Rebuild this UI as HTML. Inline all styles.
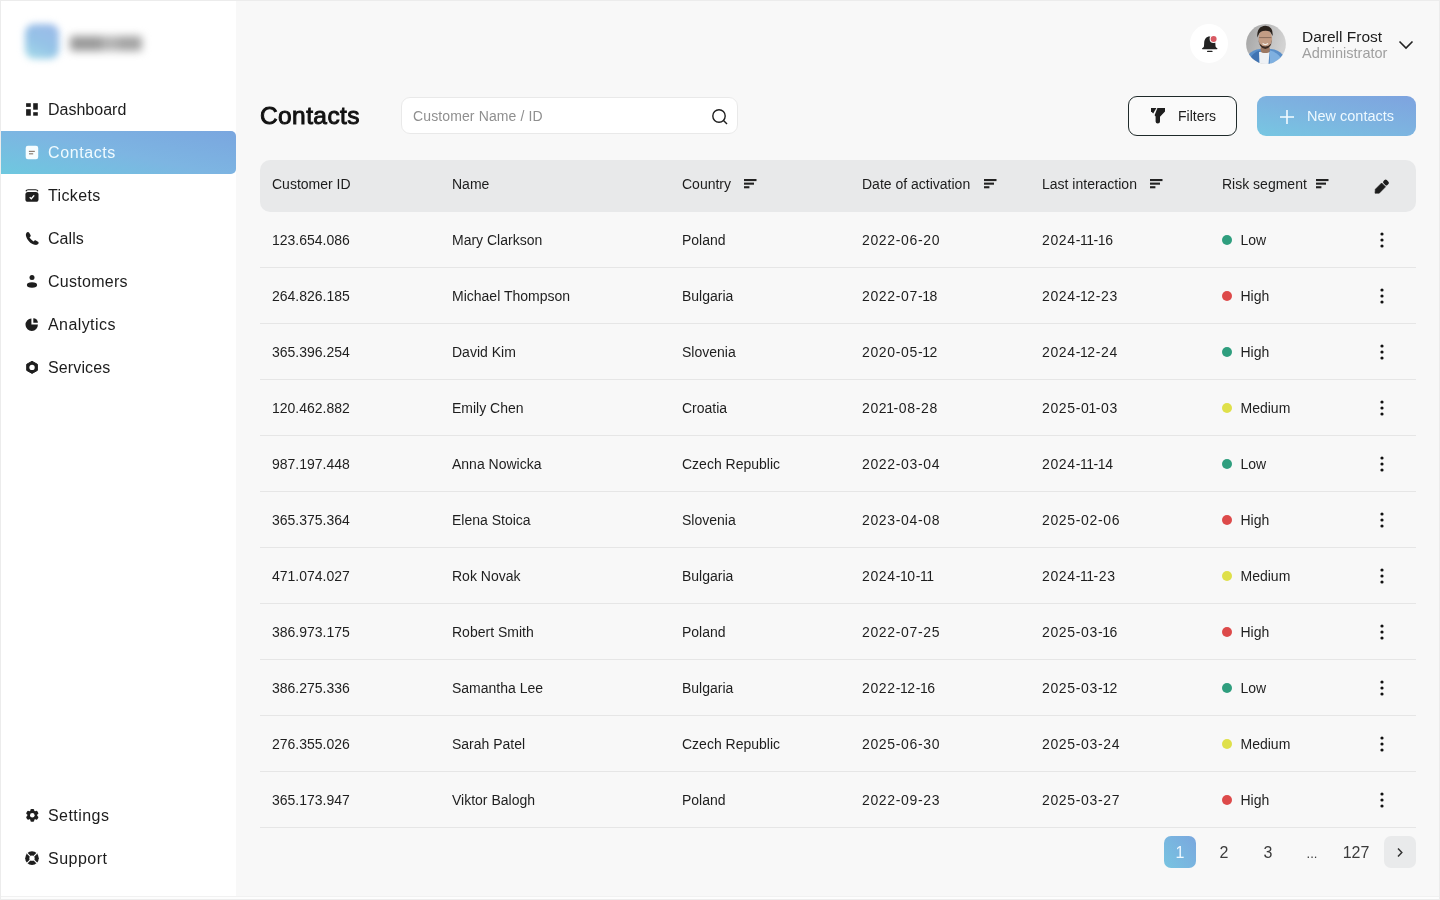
<!DOCTYPE html>
<html><head><meta charset="utf-8">
<style>
*{box-sizing:border-box;margin:0;padding:0}
html,body{width:1440px;height:900px;overflow:hidden}
body{font-family:"Liberation Sans",sans-serif;background:#f8f8f8;color:#1e1e1e;position:relative;-webkit-font-smoothing:antialiased}
.wrap{position:absolute;left:0;top:0;width:1440px;height:900px;will-change:transform}
.frame{position:absolute;left:0;top:0;width:1440px;height:900px;border:1px solid #ececec;pointer-events:none;z-index:50}
.side{position:absolute;left:0;top:0;width:236px;height:900px;background:#fff}
.logo-sq{position:absolute;left:25px;top:24px;width:34px;height:35px;border-radius:9px;background:linear-gradient(25deg,#a6dde9 0%,#95c3e7 45%,#9cb9e9 100%);filter:blur(3.8px)}
.logo-tx{position:absolute;left:66px;top:32px;width:80px;height:22px;filter:blur(4.5px)}
.logo-tx i{position:absolute;top:4px;height:15px;border-radius:3px}
.nav{position:absolute;left:1px;width:235px;height:43px;font-size:16px;line-height:43px;color:#1c1c1c}
.nav .ic{position:absolute;left:24px;top:14px;width:15px;height:15px}
.nav .tx{position:absolute;left:47px;top:0}
.nav.active{background:linear-gradient(12deg,#6ec8df 0%,#7db5e2 50%,#7aa6df 100%);border-radius:0 5px 5px 0;color:#f0fbff}
.title{position:absolute;left:260px;top:100px;font-size:24.5px;-webkit-text-stroke:0.95px #111;color:#111;line-height:32px;letter-spacing:0.4px}
.search{position:absolute;left:401px;top:97px;width:337px;height:37px;background:#fff;border:1px solid #e9e9e9;border-radius:9px}
.search .ph{position:absolute;left:11px;top:0;letter-spacing:0.12px;line-height:36px;font-size:14px;color:#8f8f8f}
.search svg{position:absolute;right:8.3px;top:9.6px}
.btn-f{position:absolute;left:1128px;top:96px;width:109px;height:39.5px;border:1.5px solid #1f2a2a;border-radius:9px;background:#fafafa}
.btn-f .tx{position:absolute;left:49px;top:1px;line-height:37px;font-size:14px;color:#1e1e1e}
.btn-f svg{position:absolute;left:21.5px;top:10.5px}
.btn-n{position:absolute;left:1257px;top:96px;width:159px;height:40px;border-radius:9px;background:linear-gradient(12deg,#77c7e2 0%,#7db3e0 50%,#7ea3df 100%)}
.btn-n .tx{position:absolute;left:50px;top:0;line-height:40px;font-size:14.5px;color:#eef9ff}
.btn-n svg{position:absolute;left:22px;top:12.5px}
.thead{position:absolute;left:260px;top:160px;width:1156px;height:51.5px;background:#e8e9ea;border-radius:10px}
.th{position:absolute;top:0;white-space:nowrap;line-height:48px;font-size:14px;color:#1c1c1c}
.si{position:absolute;top:19.2px}
.row{position:absolute;left:260px;width:1156px;height:56px;border-bottom:1px solid #e6e6e6}
.td{position:absolute;top:1px;line-height:54px;font-size:14px;color:#1e1e1e;white-space:nowrap}
.td.num{letter-spacing:0.65px}
.dot{position:absolute;top:23px;width:10px;height:10px;border-radius:50%}
.kebab{position:absolute;left:1120px;top:20px}
.pg{position:absolute;top:836px;width:32px;height:32px;border-radius:7px;line-height:34px;text-align:center;font-size:16px;color:#3c3c3c}
.pg.active{background:linear-gradient(50deg,#78c4e1,#7aa7de);color:#eef8ff}
.pg.next{background:#e9eaeb}
.pg.dots{font-size:13px;line-height:36px}
.bell{position:absolute;left:1190px;top:24px;width:38px;height:39px;border-radius:50%;background:#fff}
.bell svg{position:absolute;left:9.5px;top:11px}
.avatar{position:absolute;left:1246.3px;top:24px}
.uname{position:absolute;left:1302px;top:28px;font-size:15.5px;color:#1c1c1c;line-height:18px}
.urole{position:absolute;left:1302px;top:45px;font-size:14.5px;color:#a0a0a0;line-height:16px}
.chev{position:absolute;left:1398px;top:39.5px}
.one{font-weight:normal;margin:0 -1.1px}
.bline{position:absolute;left:0;top:896px;width:1440px;height:3px;background:#fdfdfd;border-top:1px solid #f1f1f1;z-index:49}

</style></head>
<body>
<div class="wrap">
<div class="side">
  <div class="logo-sq"></div>
  <div class="logo-tx"><i style="left:4px;width:34px;background:#999"></i><i style="left:36px;width:18px;background:#b3b3b3"></i><i style="left:52px;width:24px;background:#a3a3a3"></i></div>
<div class="nav" style="top:88px"><svg class="ic" viewBox="0 0 15 15"><rect x="1.1" y="1.2" width="4.7" height="3.7" fill="#1e1e1e"/><rect x="8.2" y="1.2" width="4.6" height="6.5" fill="#1e1e1e"/><rect x="1.1" y="7.2" width="4.7" height="6.5" fill="#1e1e1e"/><rect x="8.2" y="10.2" width="4.6" height="3.5" fill="#1e1e1e"/></svg><span class="tx" style="letter-spacing:0px">Dashboard</span></div>
<div class="nav active" style="top:131px"><svg class="ic" viewBox="0 0 15 15"><rect x="0.7" y="0.8" width="12.5" height="13.4" rx="2.2" fill="#f6fdff"/><rect x="3.9" y="5.8" width="5.9" height="1.2" fill="#8c7f74"/><rect x="4" y="8.2" width="4.2" height="1.2" fill="#8c7f74"/></svg><span class="tx" style="letter-spacing:0.6px">Contacts</span></div>
<div class="nav" style="top:174px"><svg class="ic" viewBox="0 0 15 15"><rect x="0.4" y="4" width="13.1" height="9.8" rx="2.6" fill="#1e1e1e"/><path d="M0.9 3.3 Q1.5 1.75 3.2 1.75 L10.6 1.75 Q12.3 1.75 12.9 3.3" stroke="#1e1e1e" stroke-width="1.2" fill="none"/><path d="M4.7 9.3 L6.3 10.7 L9.2 7.4" stroke="#fff" stroke-width="1.4" fill="none"/></svg><span class="tx" style="letter-spacing:0.37px">Tickets</span></div>
<div class="nav" style="top:217px"><svg class="ic" viewBox="0 0 15 15"><path d="M2.3 1.2 C1.1 1.8 0.6 3.3 1 4.9 C2.2 9.2 5.4 12.5 9.7 13.8 C11.3 14.2 12.9 13.8 13.5 12.6 C13.8 11.9 13.6 11.2 13 10.8 L10.9 9.5 C10.3 9.1 9.5 9.3 9.1 9.8 L8.6 10.4 C6.9 9.5 5.4 8 4.5 6.3 L5.2 5.8 C5.7 5.4 5.9 4.6 5.5 4 L4.2 1.7 C3.8 1.1 3 0.9 2.3 1.2 Z" fill="#1e1e1e"/></svg><span class="tx" style="letter-spacing:0.05px">Calls</span></div>
<div class="nav" style="top:260px"><svg class="ic" viewBox="0 0 15 15"><circle cx="7" cy="3.4" r="2.5" fill="#1e1e1e"/><ellipse cx="7" cy="11" rx="5.1" ry="2.8" fill="#1e1e1e"/></svg><span class="tx" style="letter-spacing:0.27px">Customers</span></div>
<div class="nav" style="top:303px"><svg class="ic" viewBox="0 0 15 15"><path d="M6.4 1.6 L6.4 7.6 L12.9 7.6 A6.2 6.2 0 1 1 6.4 1.6 Z" fill="#1e1e1e"/><path d="M8.3 1.2 A4.6 4.6 0 0 1 12.9 5.8 L8.3 5.8 Z" fill="#1e1e1e"/></svg><span class="tx" style="letter-spacing:0.42px">Analytics</span></div>
<div class="nav" style="top:346px"><svg class="ic" viewBox="0 0 15 15"><path d="M7.05 1.3 L12.4 4.3 L12.4 10.4 L7.05 13.4 L1.7 10.4 L1.7 4.3 Z" fill="#1e1e1e" stroke="#1e1e1e" stroke-width="1" stroke-linejoin="round"/><circle cx="7.05" cy="7.4" r="2.65" fill="#fff"/></svg><span class="tx" style="letter-spacing:0.13px">Services</span></div>
<div class="nav" style="top:794px"><svg class="ic" viewBox="0 0 15 15"><g fill="#1e1e1e"><circle cx="7.3" cy="7.3" r="4.9"/><rect x="5.4" y="0.9" width="3.8" height="12.8" rx="1.2"/><rect x="5.4" y="0.9" width="3.8" height="12.8" rx="1.2" transform="rotate(60 7.3 7.3)"/><rect x="5.4" y="0.9" width="3.8" height="12.8" rx="1.2" transform="rotate(120 7.3 7.3)"/></g><circle cx="7.3" cy="7.3" r="2.3" fill="#fff"/></svg><span class="tx" style="letter-spacing:0.44px">Settings</span></div>
<div class="nav" style="top:837px"><svg class="ic" viewBox="0 0 15 15"><circle cx="7" cy="7.15" r="6.8" fill="#1e1e1e"/><circle cx="7" cy="7.15" r="2.6" fill="#fff"/><path d="M2 2.15 L5.3 5.45 M12 2.15 L8.7 5.45 M2 12.15 L5.3 8.85 M12 12.15 L8.7 8.85" stroke="#fff" stroke-width="1.2"/></svg><span class="tx" style="letter-spacing:0.5px">Support</span></div>

</div>
<div class="bell"><svg width="20" height="20" viewBox="0 0 20 20"><path d="M9.7 1.6 C6.2 1.6 4.4 4.3 4.2 7.6 L4 11 C3.9 12 3.3 12.7 2.3 13.3 C1.8 13.6 1.9 14.2 2.5 14.2 L17 14.2 C17.6 14.2 17.7 13.6 17.2 13.3 C16.2 12.7 15.6 12 15.5 11 L15.3 7.6 C15.1 4.3 13.2 1.6 9.7 1.6 Z" fill="#222"/><rect x="7" y="15.8" width="5.6" height="1.3" rx=".65" fill="#222"/><circle cx="13.6" cy="3.9" r="4" fill="#fff"/><circle cx="13.6" cy="3.9" r="3" fill="#d85a63"/></svg></div>
<svg class="avatar" width="40" height="40" viewBox="0 0 40 40"><defs><clipPath id="avc"><circle cx="20" cy="20" r="19.9"/></clipPath><filter id="avb" x="-20%" y="-20%" width="140%" height="140%"><feGaussianBlur stdDeviation="0.65"/></filter><linearGradient id="avg" x1="0" y1="0" x2="1" y2="0.3"><stop offset="0" stop-color="#a3a3a3"/><stop offset="0.55" stop-color="#bdbdbd"/><stop offset="1" stop-color="#d2d2d2"/></linearGradient></defs>
<g clip-path="url(#avc)"><rect width="40" height="40" fill="url(#avg)"/><g filter="url(#avb)">
<path d="M0 42 L2 31 Q7 25.5 14 25 L25 25 Q32 25.5 37 31 L40 42 Z" fill="#5a8fc9"/>
<path d="M3 36 Q7 28 13.5 26.5 L13.5 40 L5 40 Z" fill="#3f73b2"/>
<path d="M24 26.5 Q31 28 35 34 L33 40 L24 40 Z" fill="#7fb0e0"/>
<path d="M13 28 L23.5 28 L22.5 40 L13.5 40 Z" fill="#eef1f5"/>
<rect x="14.6" y="22" width="9.2" height="7" rx="3" fill="#9c7864"/>
<ellipse cx="19.3" cy="14.8" rx="6.8" ry="9.3" fill="#c29c84"/>
<path d="M12.5 15.5 Q12.8 23.8 19.3 25 Q25.8 23.8 26.1 15.5 L25.2 19.5 Q22.5 22.6 19.3 22.6 Q16.1 22.6 13.4 19.5 Z" fill="#3b2c24"/>
<path d="M11.3 13.5 Q10.5 2.2 19.5 1.8 Q27.4 2.2 26.6 12 L25.6 10.2 Q24.5 6.6 19.3 6.8 Q14 6.8 12.6 10.8 Z" fill="#2c231e"/>
<path d="M13.2 13.6 L25.4 13.6" stroke="#5a463b" stroke-width="0.8" opacity=".7"/>
<path d="M16.6 19.6 Q19.3 21.6 22 19.6" stroke="#f4eee8" stroke-width="1.3" fill="none"/>
</g></g></svg>
<div class="uname">Darell Frost</div>
<div class="urole">Administrator</div>
<svg class="chev" width="16" height="10" viewBox="0 0 16 10"><path d="M1.5 1.5 L8 8 L14.5 1.5" stroke="#222" stroke-width="1.6" fill="none"/></svg>
<div class="title">Contacts</div>
<div class="search"><span class="ph">Customer Name / ID</span><svg width="18" height="18" viewBox="0 0 18 18"><circle cx="8" cy="8" r="6.2" stroke="#1e1e1e" stroke-width="1.4" fill="none"/><path d="M12.5 12.5 L16 16" stroke="#1e1e1e" stroke-width="1.4"/></svg></div>
<div class="btn-f"><svg width="16" height="17" viewBox="0 0 16 17"><path d="M0 0 H5.4 L2.2 5.4 L0 3.2 Z" fill="#1e1e1e"/><path d="M6.4 0 H14 V3.4 L9 8.8 V13.6 Q9 15.6 6.8 15.6 Q4.6 15.6 4.6 13.6 V8.4 L3.6 7.2 Z" fill="#1e1e1e"/></svg><span class="tx">Filters</span></div>
<div class="btn-n"><svg width="16" height="16" viewBox="0 0 16 16"><path d="M8 1 L8 15 M1 8 L15 8" stroke="#f4fbff" stroke-width="1.6"/></svg><span class="tx">New contacts</span></div>
<div class="thead"><span class="th" style="left:12px">Customer ID</span><span class="th" style="left:192px">Name</span><span class="th" style="left:422px">Country</span><span class="th" style="left:602px">Date of activation</span><span class="th" style="left:782px">Last interaction</span><span class="th" style="left:962px">Risk segment</span><svg class="si" style="left:483.7px" width="13" height="10" viewBox="0 0 13 10"><rect x="0" y="0" width="12.5" height="2.1" fill="#222"/><rect x="0" y="3.6" width="10" height="2.1" fill="#222"/><rect x="0" y="7.2" width="5.4" height="2.1" fill="#222"/></svg><svg class="si" style="left:723.6px" width="13" height="10" viewBox="0 0 13 10"><rect x="0" y="0" width="12.5" height="2.1" fill="#222"/><rect x="0" y="3.6" width="10" height="2.1" fill="#222"/><rect x="0" y="7.2" width="5.4" height="2.1" fill="#222"/></svg><svg class="si" style="left:890px" width="13" height="10" viewBox="0 0 13 10"><rect x="0" y="0" width="12.5" height="2.1" fill="#222"/><rect x="0" y="3.6" width="10" height="2.1" fill="#222"/><rect x="0" y="7.2" width="5.4" height="2.1" fill="#222"/></svg><svg class="si" style="left:1055.7px" width="13" height="10" viewBox="0 0 13 10"><rect x="0" y="0" width="12.5" height="2.1" fill="#222"/><rect x="0" y="3.6" width="10" height="2.1" fill="#222"/><rect x="0" y="7.2" width="5.4" height="2.1" fill="#222"/></svg><svg style="position:absolute;left:1111.4px;top:17px" width="20" height="20" viewBox="-10 -10 20 20"><g transform="translate(0.25 0.25) rotate(-45)"><path d="M-8.6 -0.2 L-5.6 -2.75 L3.3 -2.75 L3.3 2.75 L-5.6 2.75 Z" fill="#1e1e1e" stroke="#1e1e1e" stroke-width="0.6" stroke-linejoin="round"/><rect x="4.4" y="-2.75" width="4.6" height="5.5" rx="1.6" fill="#1e1e1e"/></g></svg></div>
<div class="row" style="top:212px"><span class="td" style="left:12px">123.654.086</span><span class="td" style="left:192px">Mary Clarkson</span><span class="td" style="left:422px">Poland</span><span class="td num" style="left:602px">2022-06-20</span><span class="td num" style="left:782px">2024-<b class="one">1</b><b class="one">1</b>-<b class="one">1</b>6</span><span class="dot" style="left:962px;background:#2f9e7e"></span><span class="td" style="left:980.5px">Low</span><svg class="kebab" width="4" height="16" viewBox="0 0 4 16"><circle cx="2" cy="2" r="1.6" fill="#111"/><circle cx="2" cy="8" r="1.6" fill="#111"/><circle cx="2" cy="14" r="1.6" fill="#111"/></svg></div>
<div class="row" style="top:268px"><span class="td" style="left:12px">264.826.185</span><span class="td" style="left:192px">Michael Thompson</span><span class="td" style="left:422px">Bulgaria</span><span class="td num" style="left:602px">2022-07-<b class="one">1</b>8</span><span class="td num" style="left:782px">2024-<b class="one">1</b>2-23</span><span class="dot" style="left:962px;background:#dd4a4a"></span><span class="td" style="left:980.5px">High</span><svg class="kebab" width="4" height="16" viewBox="0 0 4 16"><circle cx="2" cy="2" r="1.6" fill="#111"/><circle cx="2" cy="8" r="1.6" fill="#111"/><circle cx="2" cy="14" r="1.6" fill="#111"/></svg></div>
<div class="row" style="top:324px"><span class="td" style="left:12px">365.396.254</span><span class="td" style="left:192px">David Kim</span><span class="td" style="left:422px">Slovenia</span><span class="td num" style="left:602px">2020-05-<b class="one">1</b>2</span><span class="td num" style="left:782px">2024-<b class="one">1</b>2-24</span><span class="dot" style="left:962px;background:#2f9e7e"></span><span class="td" style="left:980.5px">High</span><svg class="kebab" width="4" height="16" viewBox="0 0 4 16"><circle cx="2" cy="2" r="1.6" fill="#111"/><circle cx="2" cy="8" r="1.6" fill="#111"/><circle cx="2" cy="14" r="1.6" fill="#111"/></svg></div>
<div class="row" style="top:380px"><span class="td" style="left:12px">120.462.882</span><span class="td" style="left:192px">Emily Chen</span><span class="td" style="left:422px">Croatia</span><span class="td num" style="left:602px">202<b class="one">1</b>-08-28</span><span class="td num" style="left:782px">2025-0<b class="one">1</b>-03</span><span class="dot" style="left:962px;background:#dfe04a"></span><span class="td" style="left:980.5px">Medium</span><svg class="kebab" width="4" height="16" viewBox="0 0 4 16"><circle cx="2" cy="2" r="1.6" fill="#111"/><circle cx="2" cy="8" r="1.6" fill="#111"/><circle cx="2" cy="14" r="1.6" fill="#111"/></svg></div>
<div class="row" style="top:436px"><span class="td" style="left:12px">987.197.448</span><span class="td" style="left:192px">Anna Nowicka</span><span class="td" style="left:422px">Czech Republic</span><span class="td num" style="left:602px">2022-03-04</span><span class="td num" style="left:782px">2024-<b class="one">1</b><b class="one">1</b>-<b class="one">1</b>4</span><span class="dot" style="left:962px;background:#2f9e7e"></span><span class="td" style="left:980.5px">Low</span><svg class="kebab" width="4" height="16" viewBox="0 0 4 16"><circle cx="2" cy="2" r="1.6" fill="#111"/><circle cx="2" cy="8" r="1.6" fill="#111"/><circle cx="2" cy="14" r="1.6" fill="#111"/></svg></div>
<div class="row" style="top:492px"><span class="td" style="left:12px">365.375.364</span><span class="td" style="left:192px">Elena Stoica</span><span class="td" style="left:422px">Slovenia</span><span class="td num" style="left:602px">2023-04-08</span><span class="td num" style="left:782px">2025-02-06</span><span class="dot" style="left:962px;background:#dd4a4a"></span><span class="td" style="left:980.5px">High</span><svg class="kebab" width="4" height="16" viewBox="0 0 4 16"><circle cx="2" cy="2" r="1.6" fill="#111"/><circle cx="2" cy="8" r="1.6" fill="#111"/><circle cx="2" cy="14" r="1.6" fill="#111"/></svg></div>
<div class="row" style="top:548px"><span class="td" style="left:12px">471.074.027</span><span class="td" style="left:192px">Rok Novak</span><span class="td" style="left:422px">Bulgaria</span><span class="td num" style="left:602px">2024-<b class="one">1</b>0-<b class="one">1</b><b class="one">1</b></span><span class="td num" style="left:782px">2024-<b class="one">1</b><b class="one">1</b>-23</span><span class="dot" style="left:962px;background:#dfe04a"></span><span class="td" style="left:980.5px">Medium</span><svg class="kebab" width="4" height="16" viewBox="0 0 4 16"><circle cx="2" cy="2" r="1.6" fill="#111"/><circle cx="2" cy="8" r="1.6" fill="#111"/><circle cx="2" cy="14" r="1.6" fill="#111"/></svg></div>
<div class="row" style="top:604px"><span class="td" style="left:12px">386.973.175</span><span class="td" style="left:192px">Robert Smith</span><span class="td" style="left:422px">Poland</span><span class="td num" style="left:602px">2022-07-25</span><span class="td num" style="left:782px">2025-03-<b class="one">1</b>6</span><span class="dot" style="left:962px;background:#dd4a4a"></span><span class="td" style="left:980.5px">High</span><svg class="kebab" width="4" height="16" viewBox="0 0 4 16"><circle cx="2" cy="2" r="1.6" fill="#111"/><circle cx="2" cy="8" r="1.6" fill="#111"/><circle cx="2" cy="14" r="1.6" fill="#111"/></svg></div>
<div class="row" style="top:660px"><span class="td" style="left:12px">386.275.336</span><span class="td" style="left:192px">Samantha Lee</span><span class="td" style="left:422px">Bulgaria</span><span class="td num" style="left:602px">2022-<b class="one">1</b>2-<b class="one">1</b>6</span><span class="td num" style="left:782px">2025-03-<b class="one">1</b>2</span><span class="dot" style="left:962px;background:#2f9e7e"></span><span class="td" style="left:980.5px">Low</span><svg class="kebab" width="4" height="16" viewBox="0 0 4 16"><circle cx="2" cy="2" r="1.6" fill="#111"/><circle cx="2" cy="8" r="1.6" fill="#111"/><circle cx="2" cy="14" r="1.6" fill="#111"/></svg></div>
<div class="row" style="top:716px"><span class="td" style="left:12px">276.355.026</span><span class="td" style="left:192px">Sarah Patel</span><span class="td" style="left:422px">Czech Republic</span><span class="td num" style="left:602px">2025-06-30</span><span class="td num" style="left:782px">2025-03-24</span><span class="dot" style="left:962px;background:#dfe04a"></span><span class="td" style="left:980.5px">Medium</span><svg class="kebab" width="4" height="16" viewBox="0 0 4 16"><circle cx="2" cy="2" r="1.6" fill="#111"/><circle cx="2" cy="8" r="1.6" fill="#111"/><circle cx="2" cy="14" r="1.6" fill="#111"/></svg></div>
<div class="row" style="top:772px"><span class="td" style="left:12px">365.173.947</span><span class="td" style="left:192px">Viktor Balogh</span><span class="td" style="left:422px">Poland</span><span class="td num" style="left:602px">2022-09-23</span><span class="td num" style="left:782px">2025-03-27</span><span class="dot" style="left:962px;background:#dd4a4a"></span><span class="td" style="left:980.5px">High</span><svg class="kebab" width="4" height="16" viewBox="0 0 4 16"><circle cx="2" cy="2" r="1.6" fill="#111"/><circle cx="2" cy="8" r="1.6" fill="#111"/><circle cx="2" cy="14" r="1.6" fill="#111"/></svg></div>

<div class="pg active" style="left:1164px">1</div>
<div class="pg" style="left:1208px">2</div>
<div class="pg" style="left:1252px">3</div>
<div class="pg dots" style="left:1296px">...</div>
<div class="pg" style="left:1340px">127</div>
<div class="pg next" style="left:1384px"><svg width="8" height="12" viewBox="0 0 8 12" style="position:absolute;left:12px;top:11px"><path d="M2 1.6 L5.8 5.5 L2 9.4" stroke="#333" stroke-width="1.5" fill="none"/></svg></div>
</div>
<div class="bline"></div>
<div class="frame"></div>
</body></html>
